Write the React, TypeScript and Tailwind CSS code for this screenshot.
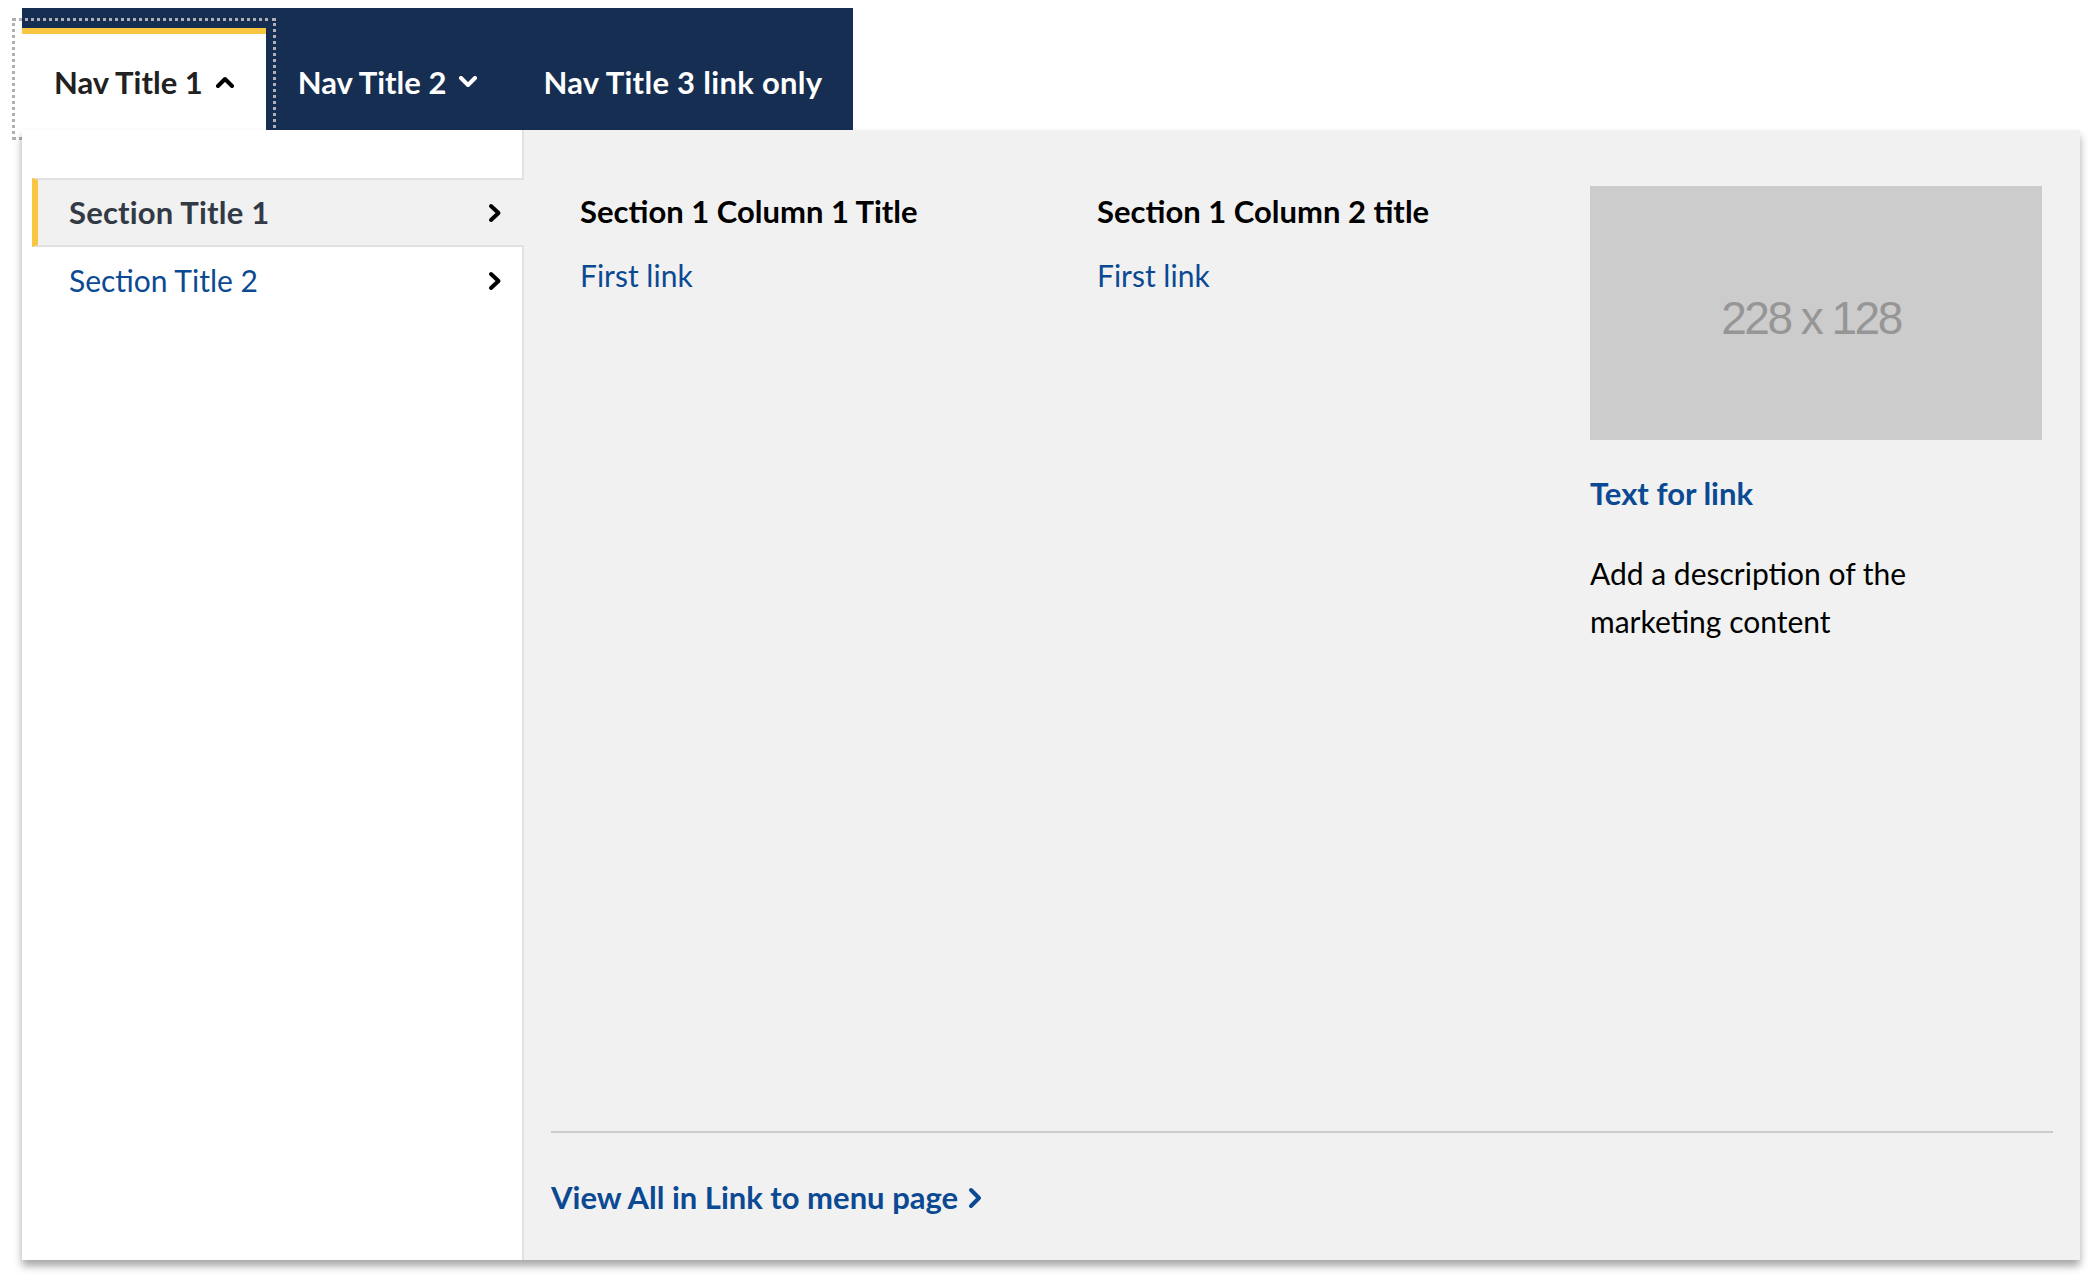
import React from "react";

const Chevron = ({ dir, className }: { dir: "up" | "down" | "right"; className?: string }) => {
  if (dir === "up")
    return (
      <svg viewBox="0 0 20 12" className={className} fill="none" stroke="currentColor" strokeWidth="4" strokeLinecap="round" strokeLinejoin="round">
        <polyline points="3,10 10,3 17,10" />
      </svg>
    );
  if (dir === "down")
    return (
      <svg viewBox="0 0 20 12" className={className} fill="none" stroke="currentColor" strokeWidth="4" strokeLinecap="round" strokeLinejoin="round">
        <polyline points="3,2 10,9 17,2" />
      </svg>
    );
  return (
    <svg viewBox="0 0 14 20" className={className} fill="none" stroke="currentColor" strokeWidth="4" strokeLinecap="round" strokeLinejoin="round">
      <polyline points="3,3 10.5,10 3,17" />
    </svg>
  );
};

export default function App() {
  return (
    <div className="min-h-[1280px] bg-white pl-[22px] pt-[8px] font-['Lato',sans-serif]">
      <nav className="flex h-[122px] w-fit bg-[#162e51] text-[31px] font-bold">
        <button className="mt-[20px] flex h-[102px] items-center gap-[12px] border-t-[6px] border-[#f9c642] bg-white pl-[32px] pr-[31px] text-[#212121] outline-[3px] outline-dotted outline-[#aeb0b5] outline-offset-[7px]">
          <span>Nav Title 1</span>
          <Chevron dir="up" className="h-[12px] w-[20px] text-black" />
        </button>
        <button className="mt-[20px] flex h-[102px] items-center gap-[12px] border-t-[6px] border-transparent pl-[32px] pr-[32px] text-white">
          <span>Nav Title 2</span>
          <Chevron dir="down" className="h-[12px] w-[20px]" />
        </button>
        <a className="mt-[20px] flex h-[102px] items-center border-t-[6px] border-transparent pl-[33px] pr-[31px] tracking-[0.3px] text-white">
          Nav Title 3 link only
        </a>
      </nav>

      <div className="relative flex h-[1130px] w-[2058px] bg-[#f1f1f1] shadow-[0_6px_8px_rgba(0,0,0,0.35)]">
        <div className="w-[502px] shrink-0 border-r-2 border-[#e1e1e1] bg-white pt-[48px] pl-[10px]">
          <div className="relative -mr-[2px] flex h-[69px] items-center justify-between border-y-2 border-l-[6px] border-y-[#e1e1e1] border-l-[#f9c642] bg-[#f1f1f1] pl-[31px] pr-[22px] text-[31px] font-bold tracking-[0.2px] text-[#323a45]">
            <span>Section Title 1</span>
            <Chevron dir="right" className="h-[20px] w-[14px] text-black" />
          </div>
          <div className="flex h-[67px] items-center justify-between pl-[37px] pr-[20px] text-[30px] text-[#0b4a93]">
            <span>Section Title 2</span>
            <Chevron dir="right" className="h-[20px] w-[14px] text-black" />
          </div>
        </div>

        <div className="flex flex-1 flex-col px-[27px]">
          <div className="flex flex-1 pt-[56px] pl-[29px] pr-[11px]">
            <div className="w-[517px] pt-[3px]">
              <h3 className="text-[31px] font-bold leading-[44px] text-black">Section 1 Column 1 Title</h3>
              <a className="mt-[20px] block text-[30px] leading-[44px] text-[#0b4a93]">First link</a>
            </div>
            <div className="w-[493px] pt-[3px]">
              <h3 className="text-[31px] font-bold leading-[44px] text-black">Section 1 Column 2 title</h3>
              <a className="mt-[20px] block text-[30px] leading-[44px] text-[#0b4a93]">First link</a>
            </div>
            <div className="w-[452px]">
              <div className="flex h-[254px] w-[452px] items-center justify-center bg-[#cccccc] pr-[10px] pt-[10px] font-['Liberation_Sans',sans-serif] text-[46px] tracking-[-2.5px] text-[#969696]">
                228 x 128
              </div>
              <a className="mt-[31px] block text-[31px] font-bold leading-[44px] text-[#0b4a93]">Text for link</a>
              <p className="mt-[34px] w-[340px] text-[30px] leading-[48px] text-black">
                Add a description of the marketing content
              </p>
            </div>
          </div>
          <div className="h-[2px] bg-[#cccccc]" />
          <a className="flex h-[127px] items-center gap-[10px] pt-[2px] text-[31px] font-bold text-[#0b4a93]">
            <span>View All in Link to menu page</span>
            <svg viewBox="0 0 14 22" className="h-[22px] w-[14px]" fill="none" stroke="currentColor" strokeWidth="4" strokeLinecap="round" strokeLinejoin="round">
              <polyline points="3,3 11,11 3,19" />
            </svg>
          </a>
        </div>
      </div>
    </div>
  );
}
